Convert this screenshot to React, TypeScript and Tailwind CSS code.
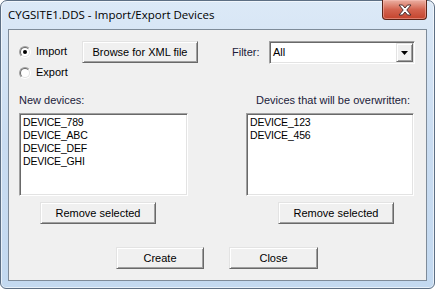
import React from "react";

const ui = { fontFamily: '"Liberation Sans", Arial, sans-serif' };

function Radio({ checked, label }: { checked?: boolean; label: string }) {
  return (
    <div className="h-[21px] flex items-center">
      <div className="w-[12px] h-[12px] rounded-full border border-t-[#a0a0a0] border-l-[#a0a0a0] border-r-[#ffffff] border-b-[#ffffff] flex items-center justify-center">
        <div className="w-[10px] h-[10px] rounded-full border border-t-[#696969] border-l-[#696969] border-r-[#e3e3e3] border-b-[#e3e3e3] bg-white flex items-center justify-center">
          {checked && <div className="w-[4px] h-[4px] rounded-full bg-black" />}
        </div>
      </div>
      <span className="ml-[5px] text-[11px] text-black leading-none">{label}</span>
    </div>
  );
}

function Button({ label, w }: { label: string; w: string }) {
  return (
    <div
      className={`${w} h-[22px] bg-[#f0f0f0] border border-t-[#e3e3e3] border-l-[#e3e3e3] border-r-[#696969] border-b-[#696969] shadow-[inset_1px_1px_0_#ffffff,inset_-1px_-1px_0_#a0a0a0] flex items-center justify-center text-[11px] text-black`}
    >
      {label}
    </div>
  );
}

function ListBox({ items, w }: { items: string[]; w: string }) {
  return (
    <div
      className={`${w} h-[83px] bg-white border border-t-[#a0a0a0] border-l-[#a0a0a0] border-r-[#ffffff] border-b-[#ffffff] shadow-[inset_1px_1px_0_#696969,inset_-1px_-1px_0_#e3e3e3] pt-[2px] pl-[3px]`}
    >
      {items.map((t) => (
        <div key={t} className="h-[13px] leading-[13px] text-[10.5px] text-black tracking-[-0.2px]">
          {t}
        </div>
      ))}
    </div>
  );
}

export default function App() {
  return (
    <div className="w-[435px] h-[289px] bg-white" style={ui}>
      <div className="w-[435px] h-[289px] rounded-t-[7px] rounded-b-[6px] border border-[#5d6f84] bg-gradient-to-b from-[#dce9f7] via-[#c9dcf1] to-[#c3d9f0] shadow-[inset_0_0_0_1px_rgba(255,255,255,0.6)] flex flex-col">
        {/* Title bar */}
        <div className="h-[28px] flex items-start">
          <div
            className="h-[28px] flex items-center ml-[7px] text-[11.5px] text-black"
            style={{ fontFamily: '"Open Sans", "Liberation Sans", sans-serif' }}
          >
            CYGSITE1.DDS - Import/Export Devices
          </div>
          <div className="flex-1" />
          <div className="-mt-px mr-[7px] w-[45px] h-[20px] rounded-b-[4px] border border-t-0 border-[#5a2418] bg-gradient-to-b from-[#eab0a3] via-[#d3634f] to-[#c4432c] shadow-[inset_0_0_0_1px_rgba(255,200,190,0.45)] flex items-center justify-center">
            <svg width="14" height="12" viewBox="0 0 14 12">
              <polygon
                points="1,1 4.5,1 7,4 9.5,1 13,1 8.8,6 13,11 9.5,11 7,8 4.5,11 1,11 5.2,6"
                fill="#ffffff"
                stroke="#4b3030"
                strokeWidth="1"
                strokeLinejoin="round"
              />
            </svg>
          </div>
        </div>

        {/* Client area */}
        <div className="mx-[7px] h-[252px] border border-[#7e8b99] bg-[#f0f0f0] flex flex-col">
          {/* Top row */}
          <div className="mt-[11px] ml-[10px] flex items-start">
            <div className="w-[63px] flex flex-col">
              <Radio checked label="Import" />
              <Radio label="Export" />
            </div>
            <Button label="Browse for XML file" w="w-[116px]" />
            <div className="ml-[34px] w-[37px] h-[23px] flex items-center text-[11px] text-[#1b1b3a]">
              Filter:
            </div>
            <div className="w-[146px] h-[23px] bg-white border border-t-[#a0a0a0] border-l-[#a0a0a0] border-r-[#ffffff] border-b-[#ffffff] shadow-[inset_1px_1px_0_#696969,inset_-1px_-1px_0_#e3e3e3] flex items-stretch p-[1px]">
              <div className="flex-1 flex items-center pl-[2px] text-[11px] text-black">All</div>
              <div className="w-[17px] bg-[#f0f0f0] border border-t-[#e3e3e3] border-l-[#e3e3e3] border-r-[#696969] border-b-[#696969] shadow-[inset_1px_1px_0_#ffffff,inset_-1px_-1px_0_#a0a0a0] flex items-center justify-center">
                <svg width="7" height="4" viewBox="0 0 7 4">
                  <polygon points="0,0 7,0 3.5,4" fill="#000" />
                </svg>
              </div>
            </div>
          </div>

          {/* Labels */}
          <div className="mt-[10px] ml-[10px] h-[14px] flex items-center text-[11px] text-[#1b1b3a]">
            <div className="w-[169px]">New devices:</div>
            <div className="ml-[58px] w-[168px] text-right pr-[4px]">Devices that will be overwritten:</div>
          </div>

          {/* Listboxes */}
          <div className="mt-[6px] ml-[10px] flex">
            <ListBox w="w-[169px]" items={["DEVICE_789", "DEVICE_ABC", "DEVICE_DEF", "DEVICE_GHI"]} />
            <div className="ml-[58px]">
              <ListBox w="w-[168px]" items={["DEVICE_123", "DEVICE_456"]} />
            </div>
          </div>

          {/* Remove buttons */}
          <div className="mt-[6px] ml-[10px] flex">
            <div className="w-[169px] pl-[21px]">
              <Button label="Remove selected" w="w-[116px]" />
            </div>
            <div className="ml-[58px] pl-[32px]">
              <Button label="Remove selected" w="w-[116px]" />
            </div>
          </div>

          {/* Bottom buttons */}
          <div className="mt-[23px] ml-[107px] flex gap-[25px]">
            <Button label="Create" w="w-[88px]" />
            <Button label="Close" w="w-[89px]" />
          </div>
        </div>
      </div>
    </div>
  );
}
